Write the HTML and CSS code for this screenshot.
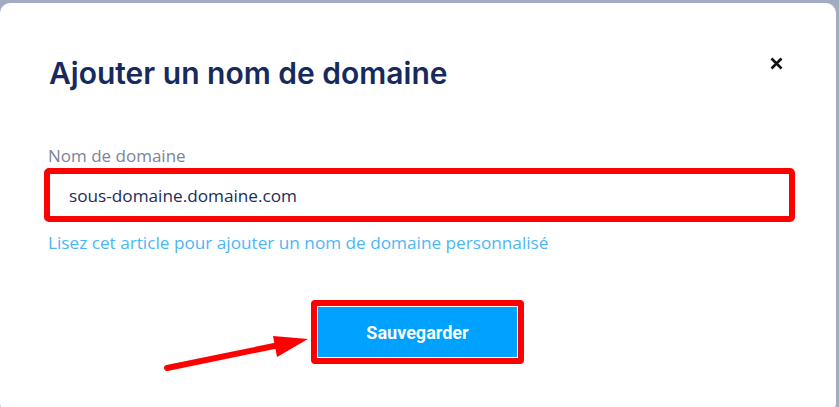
FILE: index.html
```html
<!DOCTYPE html>
<html lang="fr">
<head>
<meta charset="utf-8">
<title>Ajouter un nom de domaine</title>
<link rel="stylesheet" href="styles.css">
</head>
<body>
<div class="backdrop">
  <div class="modal">
    <div class="modal-header">
      <h2 class="modal-title">Ajouter un nom de domaine</h2>
      <button class="close" aria-label="Fermer">
        <svg width="13" height="13" viewBox="0 0 13 13"><path d="M1.5 1.5 L11.5 11.5 M11.5 1.5 L1.5 11.5" stroke="#111" stroke-width="2.6" stroke-linecap="butt"/></svg>
      </button>
    </div>
    <label class="field-label" for="domain">Nom de domaine</label>
    <div class="input-wrap">
      <input id="domain" class="input" type="text" value="sous-domaine.domaine.com">
      <span class="highlight"></span>
    </div>
    <a class="help-link" href="#">Lisez cet article pour ajouter un nom de domaine personnalisé</a>
    <div class="actions">
      <div class="btn-wrap">
        <button class="btn-save">Sauvegarder</button>
        <span class="highlight btn-highlight"></span>
      </div>
    </div>
    <svg class="arrow" width="839" height="407" viewBox="0 0 839 407">
      <line x1="167" y1="368" x2="284" y2="344" stroke="#ff0000" stroke-width="6" stroke-linecap="round"/>
      <polygon points="273,336 308,339 277,357" fill="#ff0000"/>
    </svg>
  </div>
</div>
</body>
</html>
```
FILE: styles.css
```css
* { box-sizing: border-box; }
html, body { margin: 0; padding: 0; }
body {
  background: #a2abc1;
  width: 839px;
  height: 407px;
  overflow: hidden;
}
.backdrop {
  padding-top: 3px;
}
.modal {
  position: relative;
  width: 836px;
  height: 410px;
  background: #ffffff;
  border-radius: 10px;
  padding: 52px 46px 0 48px;
}
.modal-header {
  display: flex;
  align-items: flex-start;
  justify-content: space-between;
  height: 34px;
}
.modal-title {
  margin: 0 0 0 1px;
  font-family: Inter, "Noto Sans", sans-serif;
  font-weight: 600;
  font-size: 30px;
  line-height: 36px;
  color: #172a5e;
  letter-spacing: 0;
}
.close {
  border: 0;
  background: none;
  padding: 0;
  margin: 2px 7px 0 0;
  width: 13px;
  height: 13px;
  display: flex;
}
.field-label {
  display: block;
  margin-top: 56px;
  font-family: "Open Sans", sans-serif;
  font-size: 17px;
  line-height: 22px;
  color: #7b8499;
}
.input-wrap {
  position: relative;
  margin-top: 4px;
}
.input {
  display: block;
  width: 100%;
  height: 48px;
  border: 1px solid #e2e4e8;
  border-radius: 6px;
  padding: 0 20px;
  font-family: "Open Sans", sans-serif;
  font-size: 17.2px;
  color: #1d2c5a;
  background: #fff;
  outline: none;
}
.highlight {
  position: absolute;
  left: -4px;
  top: -3px;
  right: -5px;
  bottom: -3px;
  border: 6px solid #ff0000;
  border-radius: 5px;
  pointer-events: none;
}
.help-link {
  display: block;
  margin-top: 13px;
  font-family: "Open Sans", sans-serif;
  font-size: 17.2px;
  line-height: 22px;
  color: #4cb6f7;
  text-decoration: none;
}
.actions {
  display: flex;
  justify-content: center;
  margin-top: 53px;
}
.btn-wrap {
  position: relative;
  margin-left: -3px;
}
.btn-save {
  display: block;
  width: 199px;
  height: 50px;
  border: 0;
  background: #00a1ff;
  color: #ffffff;
  font-family: Roboto, "Liberation Sans", sans-serif;
  font-weight: 700;
  font-size: 18px;
}
.btn-highlight {
  left: -7px;
  right: -7px;
  top: -7px;
  bottom: -7px;
  border-radius: 4px;
}
.arrow {
  position: absolute;
  left: 0;
  top: -3px;
  pointer-events: none;
}
```
